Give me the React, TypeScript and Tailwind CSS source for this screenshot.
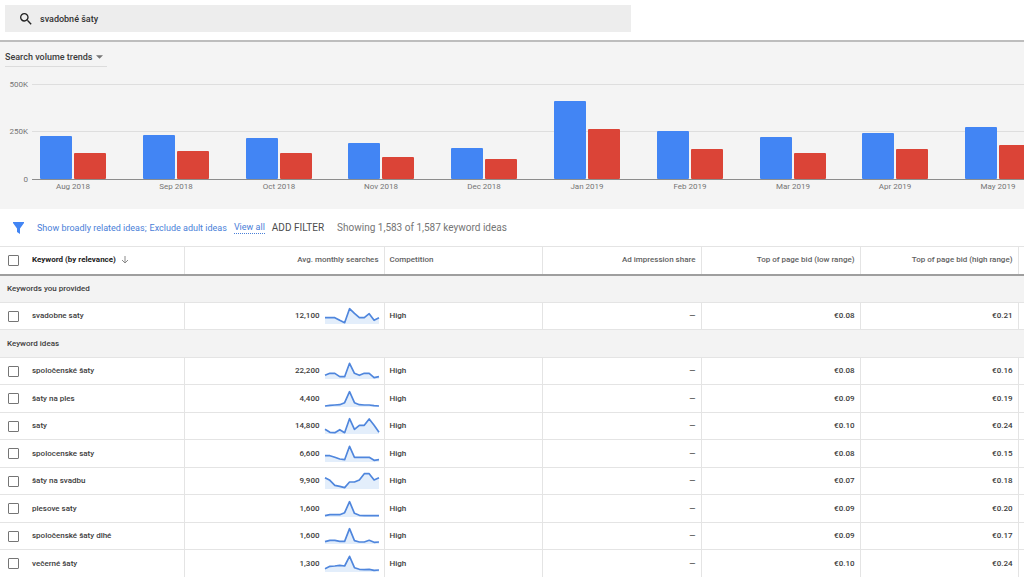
import { useState } from 'react';

interface MonthVolume {
  label: string;
  total: number;
  mobile: number;
}

// Volumes are in thousands of searches
const months: MonthVolume[] = [
  { label: 'Aug 2018', total: 227, mobile: 138 },
  { label: 'Sep 2018', total: 233, mobile: 149 },
  { label: 'Oct 2018', total: 217, mobile: 138 },
  { label: 'Nov 2018', total: 192, mobile: 118 },
  { label: 'Dec 2018', total: 163, mobile: 107 },
  { label: 'Jan 2019', total: 411, mobile: 262 },
  { label: 'Feb 2019', total: 251, mobile: 159 },
  { label: 'Mar 2019', total: 222, mobile: 138 },
  { label: 'Apr 2019', total: 243, mobile: 159 },
  { label: 'May 2019', total: 273, mobile: 181 },
];

interface Keyword {
  name: string;
  searches: string;
  trend: number[];
  low: string;
  high: string;
}

const provided: Keyword[] = [
  { name: 'svadobne saty', searches: '12,100', trend: [32, 32, 32, 40, 47, 5, 19, 32, 32, 20, 40, 32], low: '€0.08', high: '€0.21' },
];

const ideas: Keyword[] = [
  { name: 'spoločenské šaty', searches: '22,200', trend: [40, 34, 34, 44, 44, 4, 34, 40, 34, 34, 47, 44], low: '€0.08', high: '€0.16' },
  { name: 'šaty na ples', searches: '4,400', trend: [48, 46, 45, 44, 38, 5, 38, 44, 45, 45, 47, 48], low: '€0.09', high: '€0.19' },
  { name: 'saty', searches: '14,800', trend: [37, 46, 47, 38, 47, 5, 37, 25, 25, 6, 25, 46], low: '€0.10', high: '€0.24' },
  { name: 'spolocenske saty', searches: '6,600', trend: [32, 32, 37, 42, 44, 4, 37, 37, 37, 37, 46, 44], low: '€0.08', high: '€0.15' },
  { name: 'šaty na svadbu', searches: '9,900', trend: [17, 25, 40, 43, 47, 30, 30, 24, 5, 5, 24, 17], low: '€0.07', high: '€0.18' },
  { name: 'plesove saty', searches: '1,600', trend: [47, 44, 44, 44, 38, 5, 40, 46, 47, 47, 47, 47], low: '€0.09', high: '€0.20' },
  { name: 'spoločenské šaty dlhé', searches: '1,600', trend: [44, 40, 40, 43, 43, 5, 41, 45, 45, 40, 46, 45], low: '€0.09', high: '€0.17' },
  { name: 'večerné šaty', searches: '1,300', trend: [41, 34, 33, 31, 33, 4, 38, 43, 44, 43, 46, 45], low: '€0.10', high: '€0.24' },
];

function VolumeChart() {
  const baseline = 104;
  const scale = (value: number) => Math.round((value / 500) * 95);

  return (
    <svg viewBox="0 0 1024 126" className="block h-auto w-full" role="img" aria-label="Search volume trends">
      {[500, 250, 0].map((tick) => (
        <g key={tick}>
          <text x="28" y={baseline - scale(tick) + 3} textAnchor="end" fontSize="8" className="fill-[#757575]">
            {tick ? `${tick}K` : '0'}
          </text>
          {tick > 0 && <rect x="32" y={baseline - scale(tick)} width="992" height="1" className="fill-[#dedede]" />}
        </g>
      ))}
      {months.map((month, i) => {
        const x = Math.round(40 + i * 102.8);
        return (
          <g key={month.label}>
            <rect x={x} y={baseline - scale(month.total)} width="32" height={scale(month.total)} rx="1" className="fill-[#4285f4]" />
            <rect x={x + 34} y={baseline - scale(month.mobile)} width="32" height={scale(month.mobile)} rx="1" className="fill-[#db4437]" />
            <text x={x + 33} y="114" textAnchor="middle" fontSize="8" className="fill-[#757575]">
              {month.label}
            </text>
          </g>
        );
      })}
      <rect x="32" y={baseline} width="992" height="1" className="fill-[#8c8c8c]" />
    </svg>
  );
}

function Sparkline({ trend }: { trend: number[] }) {
  const points = trend.map((y, i) => `${(i * 162) / 11},${y}`).join(' ');

  return (
    <svg viewBox="0 0 162 54" className="h-[18px] w-[54px] shrink-0 overflow-visible" aria-hidden="true">
      <polygon points={`0,51 ${points} 162,51`} className="fill-[#e3eefb]" />
      <polyline points={points} fill="none" strokeWidth="5" strokeLinejoin="round" className="stroke-[#4f86dd]" />
    </svg>
  );
}

function Checkbox({ label }: { label: string }) {
  return (
    <input
      type="checkbox"
      aria-label={label}
      className="block size-[11px] shrink-0 appearance-none rounded-[1px] border border-[#757575] bg-white checked:bg-[#4285f4]"
    />
  );
}

function SectionRow({ title }: { title: string }) {
  return (
    <tr className="h-7 border-b border-[#e4e4e4] bg-[#f3f3f3]">
      <th colSpan={7} scope="rowgroup" className="px-[7px] text-left font-medium">
        {title}
      </th>
    </tr>
  );
}

function KeywordRow({ keyword }: { keyword: Keyword }) {
  const cell = 'border-r border-[#e4e4e4] px-[5px]';

  return (
    <tr className="h-7 border-b border-[#e4e4e4] even:h-[27px]">
      <td className="border-r border-[#e4e4e4] pl-2">
        <div className="flex items-center gap-[13px]">
          <Checkbox label={`Select ${keyword.name}`} />
          <span>{keyword.name}</span>
        </div>
      </td>
      <td className={cell}>
        <div className="flex items-center justify-end gap-[5px]">
          <span>{keyword.searches}</span>
          <Sparkline trend={keyword.trend} />
        </div>
      </td>
      <td className={cell}>High</td>
      <td className={`${cell} text-right`}>—</td>
      <td className={`${cell} text-right`}>{keyword.low}</td>
      <td className={`${cell} text-right`}>{keyword.high}</td>
      <td />
    </tr>
  );
}

export default function App() {
  const [query, setQuery] = useState('svadobné šaty');
  const head = 'border-r border-[#e4e4e4] px-[5px] font-medium text-[#616161]';

  return (
    <div className="overflow-hidden bg-white font-['Roboto',sans-serif] text-[9px] leading-3 text-[#3c3c3c]">
      <header className="border-b-2 border-[#bdbdbd] pt-[5px] pb-2 pl-[5px]">
        <label className="flex h-[27px] w-[61.4%] items-center gap-2 bg-[#ededed] pl-[15px]">
          <svg viewBox="3 3 18 18" className="size-3 shrink-0 fill-[#212121]" aria-hidden="true">
            <path d="M15.5 14h-.79l-.28-.27A6.47 6.47 0 0 0 16 9.5 6.5 6.5 0 1 0 9.5 16c1.61 0 3.09-.59 4.23-1.57l.27.28v.79l5 4.99L20.49 19l-4.99-5zm-6 0C7.01 14 5 11.99 5 9.5S7.01 5 9.5 5 14 7.01 14 9.5 11.99 14 9.5 14z" />
          </svg>
          <input
            type="text"
            aria-label="Keyword"
            value={query}
            onChange={(e) => setQuery(e.target.value)}
            className="min-w-0 flex-1 bg-transparent font-medium text-[#333] outline-none"
          />
        </label>
      </header>

      <section className="bg-[#f4f4f4]">
        <div className="flex pt-[5px] pl-[5px]">
          <button type="button" className="flex h-5 items-center gap-[3px] border-b border-[#dcdcdc] pr-1 font-medium">
            Search volume trends
            <svg viewBox="0 0 10 5" className="h-1 w-[7px] fill-[#757575]" aria-hidden="true">
              <path d="M0 0h10L5 5z" />
            </svg>
          </button>
        </div>
        <div className="pt-2 pb-2">
          <VolumeChart />
        </div>
      </section>

      <div className="flex h-[37px] items-center pl-[13px]">
        <svg viewBox="0 0 11 12" className="h-3 w-[11px] fill-[#4285f4]" aria-hidden="true">
          <path d="M0 0h11v1L7 6.5V12L4 10V6.5L0 1z" />
        </svg>
        <div className="flex gap-[3px] pl-[13px] text-[#4a80d8]">
          <button type="button">Show broadly related ideas;</button>
          <button type="button">Exclude adult ideas</button>
        </div>
        <a href="#filters" className="ml-[7px] border-b border-dotted border-[#4a80d8] text-[#4a80d8]">
          View all
        </a>
        <button type="button" className="ml-[7px] text-[10px] text-[#4c4c4c]">
          ADD FILTER
        </button>
        <span className="ml-[13px] text-[10px] text-[#757575]">Showing 1,583 of 1,587 keyword ideas</span>
      </div>

      <table className="w-full table-fixed border-collapse text-[8px]">
        <colgroup>
          <col className="w-[184px]" />
          <col className="w-[200px]" />
          <col className="w-[158px]" />
          <col className="w-[159px]" />
          <col className="w-[159px]" />
          <col className="w-[158px]" />
          <col className="w-[6px]" />
        </colgroup>
        <thead>
          <tr className="h-7 border-t border-b-2 border-t-[#e4e4e4] border-b-[#9e9e9e]">
            <th scope="col" className="border-r border-[#e4e4e4] pl-2 text-left font-bold text-[#212121]">
              <div className="flex items-center">
                <Checkbox label="Select all keywords" />
                <span className="pl-[13px]">Keyword (by relevance)</span>
                <svg viewBox="0 0 8 8" className="ml-[5px] size-2 fill-none stroke-[#8a8a8a]" aria-hidden="true">
                  <path d="M4 0v7M1 4l3 3 3-3" />
                </svg>
              </div>
            </th>
            <th scope="col" className={`${head} text-right`}>Avg. monthly searches</th>
            <th scope="col" className={`${head} text-left`}>Competition</th>
            <th scope="col" className={`${head} text-right`}>Ad impression share</th>
            <th scope="col" className={`${head} text-right`}>Top of page bid (low range)</th>
            <th scope="col" className={`${head} text-right`}>Top of page bid (high range)</th>
            <td />
          </tr>
        </thead>
        <tbody className="font-medium">
          <SectionRow title="Keywords you provided" />
          {provided.map((keyword) => (
            <KeywordRow key={keyword.name} keyword={keyword} />
          ))}
        </tbody>
        <tbody className="font-medium">
          <SectionRow title="Keyword ideas" />
          {ideas.map((keyword) => (
            <KeywordRow key={keyword.name} keyword={keyword} />
          ))}
        </tbody>
      </table>
    </div>
  );
}
